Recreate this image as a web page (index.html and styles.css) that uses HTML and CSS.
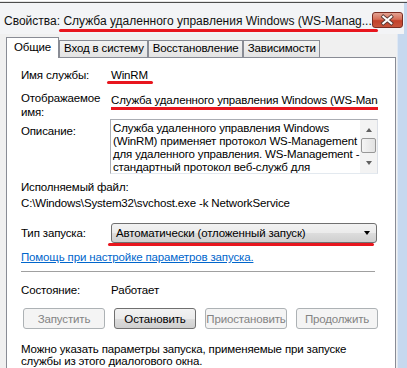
FILE: index.html
```html
<!DOCTYPE html>
<html lang="ru">
<head>
  <meta charset="UTF-8">
  <title>Свойства: WinRM</title>
  <link rel="stylesheet" href="styles.css">
</head>
<body>

  <div class="window">
    <div class="topline"></div>

    <div class="titlebar">
      <div class="title">Свойства: <span class="marked mark-title">Служба удаленного управления Windows (WS-Manag...</span></div>
      <button class="close-btn">
        <svg width="31" height="16" viewBox="0 0 31 16">
          <path d="M11 4.5 L19.5 11.5 M19.5 4.5 L11 11.5" stroke="#5a3a35" stroke-width="4" stroke-linecap="square"/>
          <path d="M11 4.5 L19.5 11.5 M19.5 4.5 L11 11.5" stroke="#fff" stroke-width="2.2" stroke-linecap="square"/>
        </svg>
      </button>
    </div>

    <div class="main">
      <div class="dialog">

        <div class="tabs">
          <div class="tab active">Общие</div>
          <div class="tab">Вход в систему</div>
          <div class="tab">Восстановление</div>
          <div class="tab">Зависимости</div>
        </div>

        <div class="panel">
          <div class="row row-name">
            <div class="label">Имя службы:</div>
            <div class="value"><span class="marked mark-name">WinRM</span></div>
          </div>

          <div class="row row-display">
            <div class="label label-two">Отображаемое<br>имя:</div>
            <div class="value value-display"><span class="marked mark-display">Служба удаленного управления Windows (WS-Management)</span></div>
          </div>

          <div class="row row-desc">
            <div class="label label-desc">Описание:</div>
            <div class="desc-box">
              <div class="desc-text">Служба удаленного управления Windows<br>(WinRM) применяет протокол WS-Management<br>для удаленного управления. WS-Management -<br>стандартный протокол веб-служб для</div>
              <div class="scrollbar">
                <div class="arrow arrow-up"></div>
                <div class="thumb"></div>
                <div class="arrow arrow-down"></div>
              </div>
            </div>
          </div>

          <div class="exe-label">Исполняемый файл:</div>
          <div class="exe-path">C:\Windows\System32\svchost.exe -k NetworkService</div>

          <div class="row row-startup">
            <div class="label">Тип запуска:</div>
            <div class="select marked mark-select">
              <span>Автоматически (отложенный запуск)</span>
              <span class="select-arrow"></span>
            </div>
          </div>

          <a class="help-link" href="#">Помощь при настройке параметров запуска.</a>

          <div class="separator"></div>

          <div class="row row-status">
            <div class="label">Состояние:</div>
            <div class="value">Работает</div>
          </div>

          <div class="buttons">
            <button class="btn" disabled>Запустить</button>
            <button class="btn">Остановить</button>
            <button class="btn" disabled>Приостановить</button>
            <button class="btn" disabled>Продолжить</button>
          </div>

          <div class="note">Можно указать параметры запуска, применяемые при запуске<br>службы из этого диалогового окна.</div>
        </div>

      </div>
      <div class="edge"></div>
    </div>
  </div>

</body>
</html>
```

FILE: styles.css
```css
* {
  margin: 0;
  box-sizing: border-box;
}

body {
  margin: 0;
  background-color: #f0f0f0;
  color: #000;
  font-family: "Liberation Sans", Arial, sans-serif;
  font-size: 11.5px;
  letter-spacing: -0.15px;
}

.window {
  width: 407px;
  height: 368px;
  overflow: hidden;
  display: flex;
  flex-direction: column;
}

.topline {
  height: 3px;
  border-top: 1px solid #fff;
  border-bottom: 1px solid #4d4d4d;
  background-color: #e4e4e4;
}

/* Title bar */
.titlebar {
  height: 31px;
  display: flex;
  justify-content: space-between;
  align-items: flex-start;
  padding: 9px 5px 0 4px;
  background-color: #f3f4f6;
  border-right: 3px solid #c6d8ee;
}

.title {
  margin-top: 2px;
  line-height: 15px;
  font-size: 12px;
  letter-spacing: 0;
  color: #111;
  white-space: nowrap;
}

.close-btn {
  width: 31px;
  height: 16px;
  padding: 0;
  border: 1px solid #7a2d22;
  border-radius: 3px;
  background: linear-gradient(#e3a292, #d66f58 45%, #c2412a 55%, #c8553c);
  display: flex;
  align-items: center;
  justify-content: center;
}

/* Red marker lines */
.marked {
  position: relative;
  display: inline-block;
  line-height: 15px;
}

.marked::after {
  content: "";
  position: absolute;
  height: 3px;
  border-radius: 2px;
  background-color: #e8161e;
}

.mark-title::after {
  left: -4px;
  right: -6px;
  bottom: -3px;
}

.mark-name::after {
  left: -4px;
  right: -5px;
  bottom: -1px;
}

.mark-display::after {
  left: -4px;
  right: -4px;
  bottom: -2px;
}

.mark-select::after {
  left: -4px;
  right: 2px;
  bottom: -4px;
}

/* Body */
.main {
  flex: 1;
  display: flex;
}

.dialog {
  width: 397px;
  display: flex;
  flex-direction: column;
}

.edge {
  flex: 1;
  background-color: #c6d8ee;
  border-left: 1px solid #dfe8f3;
}

.tabs {
  display: flex;
  align-items: flex-end;
  padding: 3px 0 0 6px;
}

.tab {
  height: 17px;
  padding: 0 3px 0 4px;
  line-height: 15px;
  border: 1px solid #898c95;
  border-bottom: none;
  background: linear-gradient(#f3f3f3, #e3e3e3);
  white-space: nowrap;
}

.tab.active {
  position: relative;
  z-index: 1;
  height: 21px;
  margin-bottom: -1px;
  padding: 2px 7px 0 7px;
  background: #fff;
}

.panel {
  flex: 1;
  margin-right: 1px;
  margin-left: 6px;
  padding: 0 17px 0 14px;
  border: 1px solid #898c95;
  border-bottom: none;
  background-color: #fff;
}

.row {
  display: flex;
}

.label {
  width: 90px;
  flex-shrink: 0;
  line-height: 15px;
}

.value {
  line-height: 15px;
  white-space: nowrap;
}

.row-name {
  margin-top: 10px;
}

.row-display {
  margin-top: 8px;
}

.label-two {
  line-height: 14px;
}

.value-display {
  padding-top: 2px;
  width: 269px;
  overflow: hidden;
  padding-bottom: 4px;
}

.label-desc {
  padding-top: 5px;
}

.desc-box {
  margin-left: -1px;
  width: 268px;
  height: 55px;
  display: flex;
  border: 1px solid #abadb3;
  border-right-color: #dbdfe6;
  border-bottom-color: #e3e9ef;
  overflow: hidden;
}

.desc-text {
  flex: 1;
  padding: 2px 0 0 2px;
  line-height: 13px;
  white-space: nowrap;
  overflow: hidden;
}

.scrollbar {
  width: 17px;
  display: flex;
  flex-direction: column;
  align-items: center;
  background-color: #f3f3f3;
}

.arrow {
  width: 0;
  height: 0;
  border-left: 3.5px solid transparent;
  border-right: 3.5px solid transparent;
}

.arrow-up {
  margin-top: 8px;
  border-bottom: 4px solid #606060;
}

.arrow-down {
  margin-top: 8px;
  border-top: 4px solid #606060;
}

.thumb {
  width: 15px;
  height: 15px;
  margin-top: 6px;
  border: 1px solid #979797;
  border-radius: 2px;
  background: linear-gradient(to right, #f4f4f4, #e2e2e2);
}

.exe-label {
  margin-top: 5px;
  line-height: 16px;
}

.exe-path {
  line-height: 16px;
  white-space: nowrap;
}

.row-startup {
  margin-top: 12px;
  align-items: center;
}

.select {
  width: 266px;
  height: 20px;
  display: flex;
  align-items: center;
  justify-content: space-between;
  padding: 0 6px 0 4px;
  border: 1px solid #707070;
  border-radius: 3px;
  background: linear-gradient(#f2f2f2, #ebebeb 50%, #dddddd 51%, #cfcfcf);
  white-space: nowrap;
}

.select-arrow {
  width: 0;
  height: 0;
  border-left: 3.5px solid transparent;
  border-right: 3.5px solid transparent;
  border-top: 4px solid #000;
}

.help-link {
  display: inline-block;
  margin-top: 7px;
  line-height: 15px;
  color: #0066cc;
}

.separator {
  height: 1px;
  margin: 6px 3px 0 0;
  background-color: #a0a0a0;
}

.row-status {
  margin-top: 11px;
}

.buttons {
  display: grid;
  grid-template-columns: repeat(4, 1fr);
  gap: 9px;
  margin: 10px 0 0 2px;
}

.btn {
  height: 21px;
  padding: 0;
  font-family: inherit;
  font-size: 11.5px;
  letter-spacing: -0.15px;
  color: #000;
  border: 1px solid #707070;
  border-radius: 3px;
  background: linear-gradient(#f2f2f2, #ebebeb 50%, #dddddd 51%, #cfcfcf);
}

.btn:disabled {
  color: #838383;
  border-color: #adb2b5;
  background: #f4f4f4;
}

.note {
  margin-top: 14px;
  line-height: 12px;
  white-space: nowrap;
}
```
